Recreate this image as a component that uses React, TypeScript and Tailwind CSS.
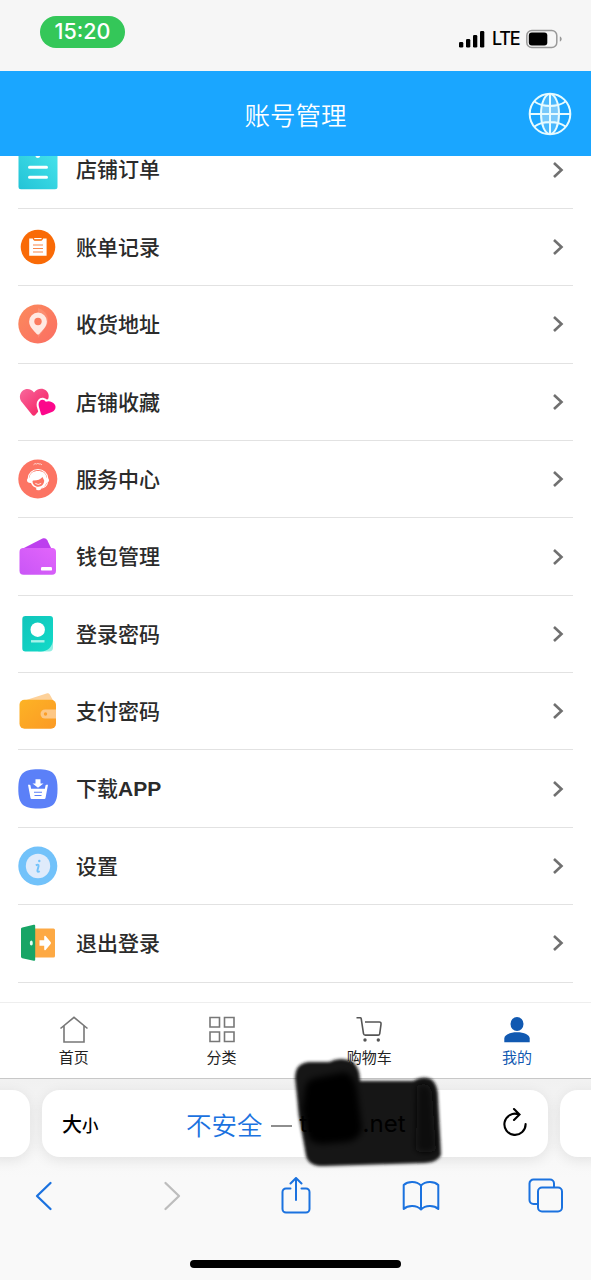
import type { ReactNode } from 'react';

type MenuItem = {
  label: ReactNode;
  icon: ReactNode;
};

const OrderIcon = () => (
  <svg viewBox="0 0 40 40" className="h-10 w-10">
    <defs>
      <linearGradient id="order" x1="0" y1="1" x2="1" y2="0">
        <stop offset="0" stopColor="#22c3d6" />
        <stop offset="1" stopColor="#48e4ec" />
      </linearGradient>
    </defs>
    <rect x="0.5" y="0" width="39" height="39.3" rx="2.5" fill="url(#order)" />
    <path d="M11.5 17.2h17M11.5 27.2h17" stroke="#fff" strokeWidth="3" strokeLinecap="round" />
    <circle cx="19.8" cy="5.5" r="2.4" fill="#fff" />
  </svg>
);

const BillIcon = () => (
  <svg viewBox="0 0 40 40" className="h-10 w-10">
    <circle cx="20" cy="20" r="17.3" fill="#f96a06" />
    <path d="M11.2 11.5h3.6c.3 1.7 1.4 2.3 2.6 2.3h5c1.3 0 2.3-.6 2.6-2.3h3.6v17.2H11.2z" fill="#fff" />
    <path d="M16.2 11h7.4v1.2h-7.4z" fill="#fff" />
    <path d="M15 18h10M15 21.5h10M15 25h10" stroke="#f9874a" strokeWidth="1.1" />
  </svg>
);

const AddressIcon = () => (
  <svg viewBox="0 0 40 40" className="h-10 w-10">
    <defs>
      <linearGradient id="address" x1="0" y1="0" x2="1" y2="1">
        <stop offset="0" stopColor="#fb8a5c" />
        <stop offset="1" stopColor="#fb6e63" />
      </linearGradient>
    </defs>
    <circle cx="19.8" cy="20" r="19.5" fill="url(#address)" />
    <path d="M20 4c8 3 12 9 9 17l-9 13z" fill="#fff" opacity=".12" />
    <path d="M20 8.6a8.9 8.9 0 0 0-8.9 8.9c0 5.3 5 9.3 7.600 12.500.7.8 1.900.8 2.600 0 2.600-3.200 7.600-7.200 7.600-12.500A8.900 8.900 0 0 0 20 8.600z" fill="#ffe9e2" />
    <circle cx="20" cy="17.5" r="3.7" fill="#fb7a5e" />
  </svg>
);

const FavoriteIcon = () => (
  <svg viewBox="0 0 40 40" className="h-10 w-10">
    <defs>
      <linearGradient id="fav" x1="0" y1="0" x2="1" y2="1">
        <stop offset="0" stopColor="#f8699c" />
        <stop offset="1" stopColor="#f5195e" />
      </linearGradient>
    </defs>
    <path d="M16 10.500C13.500 6.500 8 5.700 4.600 8.700 1 12 1.200 17 4.200 20.500L14 32.800c1 1.200 2.500 1.200 3.500 0L28.500 20c3-3.600 3-8.600-.4-11.500-3.600-3-9.400-2-12.100 2z" fill="url(#fav)" />
    <path
      d="M27.800 19.800c-1.200-2.300-4.400-2.700-6-.8-1.700 1.900-1.300 4.600-.6 6.700l1.800 6.300c.4 1.200 1.300 1.500 2.400 1.200l8.500-3.200c3.300-1.300 4.500-4.700 3-7.300-1.800-3-6.400-4.400-9.100-2.900z"
      fill="#fc078b"
      stroke="#fff"
      strokeWidth="4"
      paintOrder="stroke"
    />
  </svg>
);

const ServiceIcon = () => (
  <svg viewBox="0 0 40 40" className="h-10 w-10">
    <circle cx="19.8" cy="20" r="19.5" fill="#fc7463" />
    <path d="M15.500 5.800q1.500-2 3-.8 1.500-1.200 2.500 0 2-.5 3 .8" stroke="#ffd0c8" strokeWidth="1" fill="none" />
    <path d="M10.300 19.500a9.700 9 0 0 1 19.400 0" fill="none" stroke="#fff" strokeWidth="1.200" />
    <path d="M11.500 18.500C12 14 15.500 12 20 12s8 2 8.500 6.500c1.700.3 2.500 1.300 2.500 2.800s-1 2.600-2.600 2.600c-1 3-3.400 5-6.400 5.300-4.500.4-8-2-9-5.200-2.200.2-4-.7-4-2.700 0-1.500 1-2.500 2.500-2.800z" fill="#fff" />
    <path d="M15 21.500c4 .2 7.500-1 9.500-3.500l1.700 3.500c0 3.500-2.500 6.200-6 6.200-3.200 0-5.700-2.500-5.700-5.500z" fill="#fc7463" />
    <path d="M17 23.800c2 1.500 4.500 1.500 6.500 0-.5 2.500-5.500 2.800-6.500 0z" fill="#fff" />
    <path d="M29.500 23.500c-.6 3.500-3.300 5.600-8 6" stroke="#fff" strokeWidth="1.200" fill="none" />
    <ellipse cx="20.500" cy="29.700" rx="2.500" ry="1.500" fill="#fff" />
  </svg>
);

const WalletIcon = () => (
  <svg viewBox="0 0 40 40" className="h-10 w-10">
    <defs>
      <linearGradient id="wallet" x1="0" y1="1" x2="1" y2="0">
        <stop offset="0" stopColor="#c956f6" />
        <stop offset="1" stopColor="#e265fb" />
      </linearGradient>
    </defs>
    <path d="M2 13L24.500 1.600c2-1 3.800-.3 4.800 1.600L34 13z" fill="#bd3fee" />
    <rect x="1.5" y="11" width="36.5" height="26.7" rx="4" fill="url(#wallet)" />
    <rect x="23" y="30" width="11" height="3.6" rx="1.2" fill="#fff" />
  </svg>
);

const LoginPasswordIcon = () => (
  <svg viewBox="0 0 40 40" className="h-10 w-10">
    <defs>
      <linearGradient id="login" x1="0" y1="0" x2="1" y2="1">
        <stop offset="0" stopColor="#10c5bb" />
        <stop offset="1" stopColor="#12dac8" />
      </linearGradient>
    </defs>
    <path d="M20 37.500h11a4 4 0 0 0 4-4V22z" fill="#93efe4" />
    <path d="M7.500 2H32a3 3 0 0 1 3 3v20c0 7-5 12.500-12 12.500H7.500a3.200 3.200 0 0 1-3.200-3.200V5.200A3.200 3.200 0 0 1 7.500 2z" fill="url(#login)" />
    <circle cx="19.7" cy="15.7" r="7.2" fill="#fff" />
    <path d="M13 27.300h13.500" stroke="#a5f3ea" strokeWidth="2.4" />
  </svg>
);

const PayPasswordIcon = () => (
  <svg viewBox="0 0 40 40" className="h-10 w-10">
    <defs>
      <linearGradient id="pay" x1="0" y1="0" x2="1" y2="1">
        <stop offset="0" stopColor="#fdb325" />
        <stop offset="1" stopColor="#fb9a25" />
      </linearGradient>
    </defs>
    <path d="M5 10L28.500 2.500c1.600-.5 2.700 0 3.400 1.300L36 11H5z" fill="#fdd19a" />
    <rect x="1.5" y="8.7" width="36.5" height="29" rx="5" fill="url(#pay)" />
    <path d="M27 18.500h11v9H27a4.500 4.500 0 0 1 0-9z" fill="#fdc785" />
    <circle cx="27.5" cy="23" r="1.7" fill="#fb9f2a" />
  </svg>
);

const DownloadIcon = () => (
  <svg viewBox="0 0 40 40" className="h-10 w-10">
    <path d="M20 .3c15 0 19.500 4.500 19.500 19.700S35 39.500 20 39.500.3 35 .3 20 5 .3 20 .3z" fill="#5b80f8" />
    <path d="M17.500 10.300h5v4.200h3L20 18.700l-5.500-4.200h3z" fill="#fff" />
    <path d="M10 15.800h1.600c.5 0 .8.300.9.800l.6 3.200h13.800l.6-3.200c.1-.5.400-.8.900-.8H30l-2.500 13.300c-.1.700-.5 1-1.200 1H13.700c-.7 0-1.100-.3-1.200-1z" fill="#fff" />
    <path d="M16 23.200h8M16.500 26.500h7" stroke="#5b80f8" strokeWidth="1.1" />
  </svg>
);

const SettingsIcon = () => (
  <svg viewBox="0 0 40 40" className="h-10 w-10">
    <circle cx="19.8" cy="20" r="19.5" fill="#72c2fa" />
    <circle cx="20" cy="20" r="12.2" fill="#dfebfb" />
    <circle cx="21.3" cy="15" r="1.2" fill="#72c2fa" />
    <path d="M17.800 19.300c1.600-.8 3-.8 2.800.7l-1.200 4.500c-.2 1.500.8 1.600 2.300.7" fill="none" stroke="#72c2fa" strokeWidth="1.9" />
  </svg>
);

const LogoutIcon = () => (
  <svg viewBox="0 0 40 40" className="h-10 w-10">
    <rect x="15" y="5.5" width="22" height="29" rx="1.5" fill="#fda944" />
    <path d="M3 6c0-.9.500-1.400 1.300-1.600l11.400-2.600c.9-.2 1.500.2 1.500 1.100v33.700c0 1-.6 1.400-1.500 1.200L4.300 35.200C3.500 35 3 34.500 3 33.600z" fill="#18a566" />
    <ellipse cx="13.3" cy="20" rx="1.5" ry="2.5" fill="#e4fff2" />
    <path d="M21.500 17.300h4.700v-3.600c0-1 .7-1.200 1.400-.6l5 6c.5.600.5 1.200 0 1.800l-5 6c-.7.600-1.400.4-1.400-.6v-3.600h-4.700z" fill="#fff" />
  </svg>
);

const menu: MenuItem[] = [
  { label: '店铺订单', icon: <OrderIcon /> },
  { label: '账单记录', icon: <BillIcon /> },
  { label: '收货地址', icon: <AddressIcon /> },
  { label: '店铺收藏', icon: <FavoriteIcon /> },
  { label: '服务中心', icon: <ServiceIcon /> },
  { label: '钱包管理', icon: <WalletIcon /> },
  { label: '登录密码', icon: <LoginPasswordIcon /> },
  { label: '支付密码', icon: <PayPasswordIcon /> },
  { label: <>下载<span className="font-bold">APP</span></>, icon: <DownloadIcon /> },
  { label: '设置', icon: <SettingsIcon /> },
  { label: '退出登录', icon: <LogoutIcon /> },
];

const tabs = [
  {
    label: '首页',
    icon: (
      <svg viewBox="0 0 30 30" className="h-[30px] w-[30px]" fill="none" stroke="#777" strokeWidth="1.6">
        <path d="M1.500 13.500L15 2.300l13.500 11.200M5 11V27h20V11" />
      </svg>
    ),
  },
  {
    label: '分类',
    icon: (
      <svg viewBox="0 0 30 30" className="h-[30px] w-[30px]" fill="none" stroke="#777" strokeWidth="1.6">
        <path d="M3 2.500h9.500V12H3zM17.500 2.500H27V12h-9.500zM3 17h9.500v9.500H3zM17.500 17H27v9.500h-9.500z" />
      </svg>
    ),
  },
  {
    label: '购物车',
    icon: (
      <svg viewBox="0 0 30 30" className="h-[30px] w-[30px]" fill="none" stroke="#555" strokeWidth="1.6">
        <path d="M2.500 2.800h3.700c.6 0 .9.300 1 .8l2.300 15c.2 1 .7 1.500 1.700 1.500h13c.8 0 1.300-.4 1.500-1.300l1.300-9.500c.2-1.500-.4-2.300-1.700-2.300H11" />
        <circle cx="11" cy="25" r="1.7" fill="#555" stroke="none" />
        <circle cx="24.3" cy="25" r="1.7" fill="#555" stroke="none" />
      </svg>
    ),
  },
  {
    label: '我的',
    active: true,
    icon: (
      <svg viewBox="0 0 30 30" className="h-[30px] w-[30px]" fill="#1159b1">
        <ellipse cx="15" cy="9" rx="6.5" ry="7" />
        <path d="M2.300 27.300v-3.800c0-3.600 5.500-6.200 12.700-6.200s12.700 2.600 12.700 6.200v3.800z" />
      </svg>
    ),
  },
];

const StatusBar = () => (
  <div className="flex h-[71px] shrink-0 items-start justify-between bg-[#f6f6f6] pl-10 pr-[27px] pt-4">
    <div className="flex h-8 w-[85px] items-center justify-center rounded-full bg-[#34c759] pb-px font-[Inter] text-[21.5px] font-[450] text-white">
      15:20
    </div>
    <div className="flex items-center pt-3">
      <svg viewBox="0 0 26 18" className="mr-px h-[18px] w-[26px]">
        <rect x="0" y="12" width="4.3" height="5.5" rx="1.3" />
        <rect x="7" y="9" width="4.3" height="8.5" rx="1.3" />
        <rect x="14" y="5" width="4.3" height="12.5" rx="1.3" />
        <rect x="21" y="1" width="4.3" height="16.5" rx="1.3" />
      </svg>
      <span className="ml-[6px] w-[28px] pt-px font-[Inter] text-[18px] leading-5 font-medium tracking-[-1.2px] text-black">LTE</span>
      <svg viewBox="0 0 38 20" className="ml-[6px] h-5 w-[38px]">
        <rect x="0.8" y="1.5" width="30" height="17" rx="5" fill="none" stroke="#999" strokeWidth="1.5" />
        <rect x="2.8" y="3.5" width="18.5" height="13" rx="3" />
        <path d="M33.800 7.500c2.500.5 2.500 4.500 0 5z" fill="#999" />
      </svg>
    </div>
  </div>
);

const Header = () => (
  <header className="grid h-[85px] shrink-0 grid-cols-[60px_1fr_60px] items-center bg-[#1aa6ff]">
    <h1 className="col-start-2 pt-[5px] text-center text-[25.5px] font-[350] text-white">账号管理</h1>
    <svg viewBox="0 0 44 44" className="ml-[-3px] h-11 w-11" fill="none" stroke="#e6fbff" strokeWidth="2">
      <path d="M15 11.500q7 2 14 0 3 10.500 0 21-7-2-14 0-3-10.500 0-21z" fill="#78c9fb" stroke="none" />
      <ellipse cx="22" cy="22" rx="9" ry="20" fill="#78c9fb" fillOpacity=".5" />
      <circle cx="22" cy="22" r="20.3" />
      <path d="M1.700 22h40.600M22 1.700v40.600M6.500 9.500c8 6 23 6 31 0M6.500 34.500c8-6 23-6 31 0" />
    </svg>
  </header>
);

const TabBar = () => (
  <nav className="grid h-[77px] shrink-0 grid-cols-4 border-y border-t-[#eee] border-b-[#c8c8c8] bg-white pt-3">
    {tabs.map((tab) => (
      <div key={tab.label} className="flex flex-col items-center">
        {tab.icon}
        <span className={tab.active ? 'text-[15px] leading-[26px] text-[#1159b1]' : 'text-[15px] leading-[26px] text-[#222]'}>
          {tab.label}
        </span>
      </div>
    ))}
  </nav>
);

// marker strokes drawn over the address
const Scribble = () => (
  <svg viewBox="0 0 165 125" className="absolute left-[285px] top-[1050px] h-[125px] w-[165px]">
    <defs>
      <filter id="soft" x="-10%" y="-10%" width="120%" height="120%">
        <feGaussianBlur stdDeviation="1.6" />
      </filter>
      <filter id="softer" x="-20%" y="-20%" width="140%" height="140%">
        <feGaussianBlur stdDeviation="3" />
      </filter>
    </defs>
    <path d="M10 28Q10 13 24 12L44 12Q56 6 68 12Q75 18 75 31L128 31Q137 25 146 29Q153 34 153 48L156 105Q153 112 140 113L40 116Q24 117 21 106L14 66z" fill="#181818" filter="url(#soft)" />
    <g filter="url(#softer)">
      <path d="M20 40Q20 30 30 28L60 22Q70 26 72 40L77 78Q76 89 62 92L38 94Q24 94 22 84L17 60z" fill="#000" />
      <path d="M132 36Q143 30 147 42L151 100Q140 106 131 100z" fill="#0b0b0b" />
    </g>
  </svg>
);

const BrowserBar = () => (
  <footer className="flex flex-1 flex-col overflow-hidden bg-[#f9f9f9]">
    <div className="flex h-[98px] shrink-0 items-start gap-3 overflow-hidden bg-linear-to-b from-[#f1f1f1] to-[#f9f9f9] pt-[11px]">
      <div className="-ml-[17px] h-[67px] w-[47px] shrink-0 rounded-[18px] bg-white shadow-[0_3px_14px_rgba(0,0,0,0.09)]" />
      <div className="flex h-[67px] w-[506px] shrink-0 items-center rounded-[18px] bg-white pl-5 pr-5 shadow-[0_3px_14px_rgba(0,0,0,0.09)]">
        <div className="flex w-[124px] items-baseline pt-[3px] font-medium text-black">
          <span className="text-[20px]">大</span>
          <span className="text-[16.5px]">小</span>
        </div>
        <span className="pt-[5px] text-[25.5px] font-[350] whitespace-nowrap text-[#1b72df]">不安全</span>
        <span className="ml-2 mt-1 h-0.5 w-[21px] bg-[#8e8e8e]" />
        <span className="relative z-10 ml-2 flex w-[106px] justify-between pt-px font-[Inter] text-[24px] text-black">
          <span>ti</span>
          <span>.net</span>
        </span>
        <svg viewBox="0 0 26 30" className="ml-auto mb-1 h-[30px] w-[26px]" fill="none" stroke="#000" strokeWidth="2.1" strokeLinecap="round">
          <path d="M16.500 7.300A10.600 10.600 0 1 0 23.600 17M12 2l5.500 5.500L12 13" />
        </svg>
      </div>
      <div className="h-[67px] w-[47px] shrink-0 rounded-[18px] bg-white shadow-[0_3px_14px_rgba(0,0,0,0.09)]" />
    </div>
    <div className="-mx-[17px] grid h-[38px] grid-cols-5 items-center justify-items-center">
      <svg viewBox="0 0 20 30" className="mr-[3px] h-[30px] w-5" fill="none" stroke="#1b72df" strokeWidth="2.3" strokeLinecap="round" strokeLinejoin="round">
        <path d="M16.500 2L3 15l13.500 13" />
      </svg>
      <svg viewBox="0 0 20 30" className="ml-[3px] h-[30px] w-5" fill="none" stroke="#bdbdbd" strokeWidth="2.3" strokeLinecap="round" strokeLinejoin="round">
        <path d="M3.500 2L17 15 3.500 28" />
      </svg>
      <svg viewBox="0 0 32 38" className="h-[38px] w-8" fill="none" stroke="#1b72df" strokeWidth="2" strokeLinecap="round" strokeLinejoin="round">
        <path d="M10.500 11.500H6A3.500 3.500 0 0 0 2.500 15v17A3.500 3.500 0 0 0 6 35.500h20a3.500 3.500 0 0 0 3.500-3.500V15a3.500 3.500 0 0 0-3.500-3.500h-4.500M16 23V1.300M10.500 6.500L16 1l5.500 5.500" />
      </svg>
      <svg viewBox="0 0 38 32" className="h-8 w-[38px]" fill="none" stroke="#1b72df" strokeWidth="2" strokeLinejoin="round">
        <path d="M19 5.500C14.500 1 6 1 1.700 5v24C6 25 14.500 25 19 29.500c4.500-4.500 13-4.500 17.300-.5V5C32 1 23.500 1 19 5.500zM19 5.500v24" />
      </svg>
      <svg viewBox="0 0 36 36" className="h-9 w-9" fill="none" stroke="#1b72df" strokeWidth="2">
        <rect x="10" y="9.5" width="24" height="24" rx="4" />
        <path d="M10 26H5.500a4 4 0 0 1-4-4V5.500a4 4 0 0 1 4-4H22a4 4 0 0 1 4 4v4" />
      </svg>
    </div>
    <div className="mx-auto mt-auto mb-3 h-2 w-[211px] rounded-full bg-black" />
  </footer>
);

export default function App() {
  return (
    <div className="relative flex h-[1280px] w-[591px] flex-col overflow-hidden bg-white font-['Liberation_Sans','Noto_Sans_CJK_SC',sans-serif]">
      <StatusBar />
      <Header />
      <main className="flex h-[846px] shrink-0 flex-col justify-end overflow-hidden px-[18px] pb-[19.5px]">
        {menu.map((item, i) => (
          <div key={i} className="flex h-[77.36px] shrink-0 items-center border-b-[1.5px] border-[#e2e2e2]">
            {item.icon}
            <span className="ml-[18px] flex-1 pt-px text-[21px] font-medium text-[#2b2b2b]">{item.label}</span>
            <svg viewBox="0 0 12 18" className="mr-[9px] h-[18px] w-3" fill="none" stroke="#707070" strokeWidth="2.6">
              <path d="M2 2l7.500 7L2 16" />
            </svg>
          </div>
        ))}
      </main>
      <TabBar />
      <BrowserBar />
      <Scribble />
    </div>
  );
}
